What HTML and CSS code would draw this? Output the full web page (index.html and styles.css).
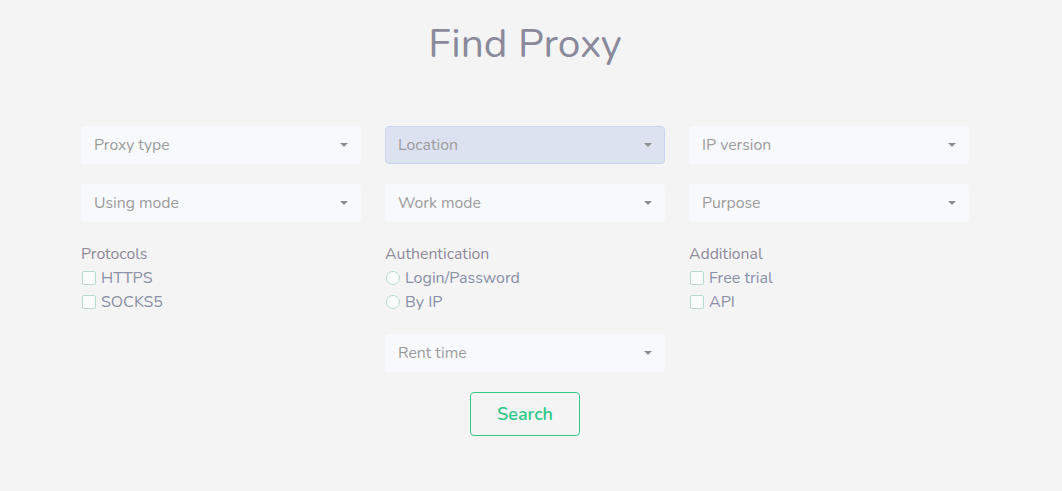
FILE: index.html
```html
<!DOCTYPE html>
<html lang="en">
<head>
    <meta charset="UTF-8">
    <meta name="viewport" content="width=device-width, initial-scale=1.0">
    <title>Find Proxy</title>
    <link rel="stylesheet" href="styles.css">
</head>
<body>

<div class="page">
    <h1 class="title">Find Proxy</h1>

    <form class="filters" onsubmit="return false">
        <div class="select"><span>Proxy type</span><i class="caret"></i></div>
        <div class="select active"><span>Location</span><i class="caret"></i></div>
        <div class="select"><span>IP version</span><i class="caret"></i></div>

        <div class="select"><span>Using mode</span><i class="caret"></i></div>
        <div class="select"><span>Work mode</span><i class="caret"></i></div>
        <div class="select"><span>Purpose</span><i class="caret"></i></div>

        <div class="group">
            <div class="group-title">Protocols</div>
            <label class="option"><span class="box"></span>HTTPS</label>
            <label class="option"><span class="box"></span>SOCKS5</label>
        </div>
        <div class="group">
            <div class="group-title">Authentication</div>
            <label class="option"><span class="box round"></span>Login/Password</label>
            <label class="option"><span class="box round"></span>By IP</label>
        </div>
        <div class="group">
            <div class="group-title">Additional</div>
            <label class="option"><span class="box"></span>Free trial</label>
            <label class="option"><span class="box"></span>API</label>
        </div>

        <div class="select middle"><span>Rent time</span><i class="caret"></i></div>
    </form>

    <div class="actions">
        <button class="search">Search</button>
    </div>
</div>

</body>
</html>
```

FILE: styles.css
```css
body {
    margin: 0;
    background-color: #f4f4f4;
    font-family: 'Nunito', 'Lato', sans-serif;
}
.page {
    padding-right: 12px;
}
.title {
    margin: 19px 0 0;
    text-align: center;
    font-size: 40.7px;
    line-height: 50px;
    font-weight: 400;
    color: #8a8a9b;
}
.filters {
    display: grid;
    grid-template-columns: repeat(3, 280px);
    column-gap: 24px;
    row-gap: 20px;
    justify-content: center;
    margin-top: 57px;
}
.select {
    height: 38px;
    box-sizing: border-box;
    display: flex;
    align-items: center;
    justify-content: space-between;
    padding: 0 13px;
    background-color: #f8f9fc;
    border-radius: 4px;
    font-size: 15.8px;
    color: #9c9c9c;
}
.select.active {
    background-color: #dde2f0;
    border: 1px solid #cdd5ee;
    padding: 0 12px;
}
.select.middle {
    grid-column: 2;
}
.caret {
    width: 0;
    height: 0;
    border-left: 4px solid transparent;
    border-right: 4px solid transparent;
    border-top: 4px solid #8f8f8f;
}
.group-title {
    font-size: 15.8px;
    line-height: 20px;
    color: #8e8a9a;
    padding-top: 2px;
    margin-bottom: 2px;
}
.option {
    display: flex;
    align-items: center;
    height: 24px;
    font-size: 16px;
    color: #8a8fa6;
}
.box {
    width: 14px;
    height: 14px;
    box-sizing: border-box;
    border: 1px solid #bcd8d4;
    border-radius: 2px;
    background-color: #fbfbfb;
    margin: 0 5px 0 1px;
}
.box.round {
    border-radius: 50%;
}
.actions {
    display: flex;
    justify-content: center;
    margin-top: 20px;
}
.search {
    width: 110px;
    height: 44px;
    background: transparent;
    border: 1px solid #2fcc8e;
    border-radius: 4px;
    color: #2cc98a;
    font-family: inherit;
    font-size: 18px;
    font-weight: 600;
    cursor: pointer;
}
```
